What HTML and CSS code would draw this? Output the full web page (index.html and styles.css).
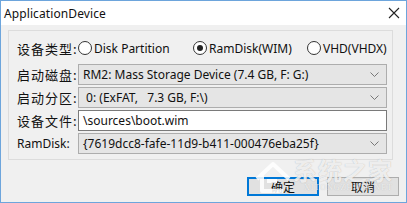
FILE: index.html
```html
<!DOCTYPE html>
<html>
<head>
<meta charset="utf-8">
<link rel="stylesheet" href="styles.css">
</head>
<body>
<div class="window">
  <div class="titlebar">
    <span class="title">ApplicationDevice</span>
    <svg class="close" width="12" height="12" viewBox="0 0 12 12"><path d="M1 1L11 11M11 1L1 11" stroke="#222" stroke-width="1.1" fill="none"/></svg>
  </div>
  <div class="body">
    <div class="group">
      <div class="label">设备类型:</div>
      <div class="radios">
        <label class="radio"><span class="circle"></span>Disk Partition</label>
        <label class="radio"><span class="circle on"></span>RamDisk(WIM)</label>
        <label class="radio"><span class="circle"></span>VHD(VHDX)</label>
      </div>
      <div class="label">启动磁盘:</div>
      <div class="select"><span>RM2: Mass Storage Device (7.4 GB, F: G:)</span><svg class="chev" width="9" height="5" viewBox="0 0 9 5"><path d="M0.5 0.5L4.5 4.5L8.5 0.5" stroke="#777" fill="none"/></svg></div>
      <div class="label">启动分区:</div>
      <div class="select"><span>&nbsp;0: (ExFAT,&nbsp;&nbsp; 7.3 GB, F:\)</span><svg class="chev" width="9" height="5" viewBox="0 0 9 5"><path d="M0.5 0.5L4.5 4.5L8.5 0.5" stroke="#777" fill="none"/></svg></div>
      <div class="label">设备文件:</div>
      <div class="input">\sources\boot.wim</div>
      <div class="label latin">RamDisk:</div>
      <div class="select"><span>{7619dcc8-fafe-11d9-b411-000476eba25f}</span><svg class="chev" width="9" height="5" viewBox="0 0 9 5"><path d="M0.5 0.5L4.5 4.5L8.5 0.5" stroke="#777" fill="none"/></svg></div>
    </div>
    <div class="buttons">
      <div class="btn default">确定</div>
      <div class="btn">取消</div>
    </div>
  </div>
  <div class="watermark">
    <svg class="wm-logo" width="40" height="36" viewBox="0 0 40 36"><path d="M4 20L20 5L36 20M9 16V32H30M14 22H24" stroke="rgba(255,255,255,0.85)" stroke-width="4" fill="none" stroke-linejoin="round"/></svg>
    <div class="wm-text"><span class="wm-big">系统之家</span><span class="wm-small">XITONGZHIJIA.NET</span></div>
  </div>
</div>
</body>
</html>
```
FILE: styles.css
```css
html, body { margin: 0; padding: 0; }
body { width: 407px; height: 203px; overflow: hidden; background: #fff; }
.window {
  position: relative;
  width: 407px; height: 203px; box-sizing: border-box;
  border: 1px solid #6da5dc;
  background: #f0f0f0;
  font-family: "Noto Sans", "Noto Sans CJK SC", sans-serif;
  color: #111;
}
.titlebar {
  height: 24px; background: #fff;
  display: flex; align-items: center; justify-content: space-between;
  padding: 0 6px 0 3px;
}
.title { font-size: 12px; color: #111; letter-spacing: 0.1px; }
.body { padding: 5px 13px 0 7px; }
.group {
  height: 130px; box-sizing: border-box;
  border: 1px solid #dcdcdc;
  padding: 3px 6px 0 8px;
  display: grid;
  grid-template-columns: 61px 1fr;
  grid-template-rows: 28px 21px 21px 21px 21px;
  row-gap: 2px;
  align-items: center;
}
.label {
  font-family: "Noto Sans CJK SC", sans-serif;
  font-size: 13px; letter-spacing: 1px; color: #111;
}
.label.latin { font-family: "Noto Sans", sans-serif; font-size: 12px; letter-spacing: 0; }
.radios { display: flex; font-size: 12px; }
.radio { display: flex; align-items: center; gap: 2px; }
.radio:nth-child(1) { width: 115px; }
.radio:nth-child(2) { width: 114px; }
.circle {
  width: 12px; height: 12px; border: 1px solid #333; border-radius: 50%;
  background: #fff; display: inline-block; position: relative;
}
.circle.on::after {
  content: ""; position: absolute; left: 3px; top: 3px; width: 6px; height: 6px;
  border-radius: 50%; background: #222;
}
.select {
  height: 21px; box-sizing: border-box;
  border: 1px solid #adadad; background: #e5e5e5;
  display: flex; align-items: center; justify-content: space-between;
  padding: 0 7px 0 4px; font-size: 12px;
}
.input {
  height: 21px; box-sizing: border-box;
  border: 1px solid #7a7a7a; background: #fff;
  display: flex; align-items: center; padding: 0 4px; font-size: 12px;
}
.buttons { display: flex; justify-content: flex-end; gap: 8px; padding: 17px 0 0 0; margin-right: -6px; }
.btn {
  width: 72px; height: 19px; box-sizing: border-box;
  border: 1px solid #adadad; background: #e1e1e1;
  display: flex; align-items: center; justify-content: center;
  font-family: "Noto Sans CJK SC", sans-serif; font-size: 12px;
}
.btn.default { border: 2px solid #0078d7; }
.watermark {
  position: absolute; left: 252px; top: 156px;
  display: flex; align-items: flex-start; gap: 0;
  pointer-events: none;
}
.wm-logo { margin-top: 2px; }
.wm-text { display: flex; flex-direction: column; align-items: flex-end; }
.wm-big {
  font-family: "Noto Sans CJK SC", sans-serif; font-size: 24px; font-weight: bold;
  color: rgba(255,255,255,0.8); letter-spacing: 1px;
  text-shadow: 0 0 1px rgba(110,110,110,0.5);
  line-height: 26px;
}
.wm-small {
  font-family: "Liberation Serif", serif; font-size: 8px; color: rgba(255,255,255,0.75);
  text-shadow: 0 0 1px rgba(110,110,110,0.4);
  letter-spacing: 1px; line-height: 9px;
}
```
